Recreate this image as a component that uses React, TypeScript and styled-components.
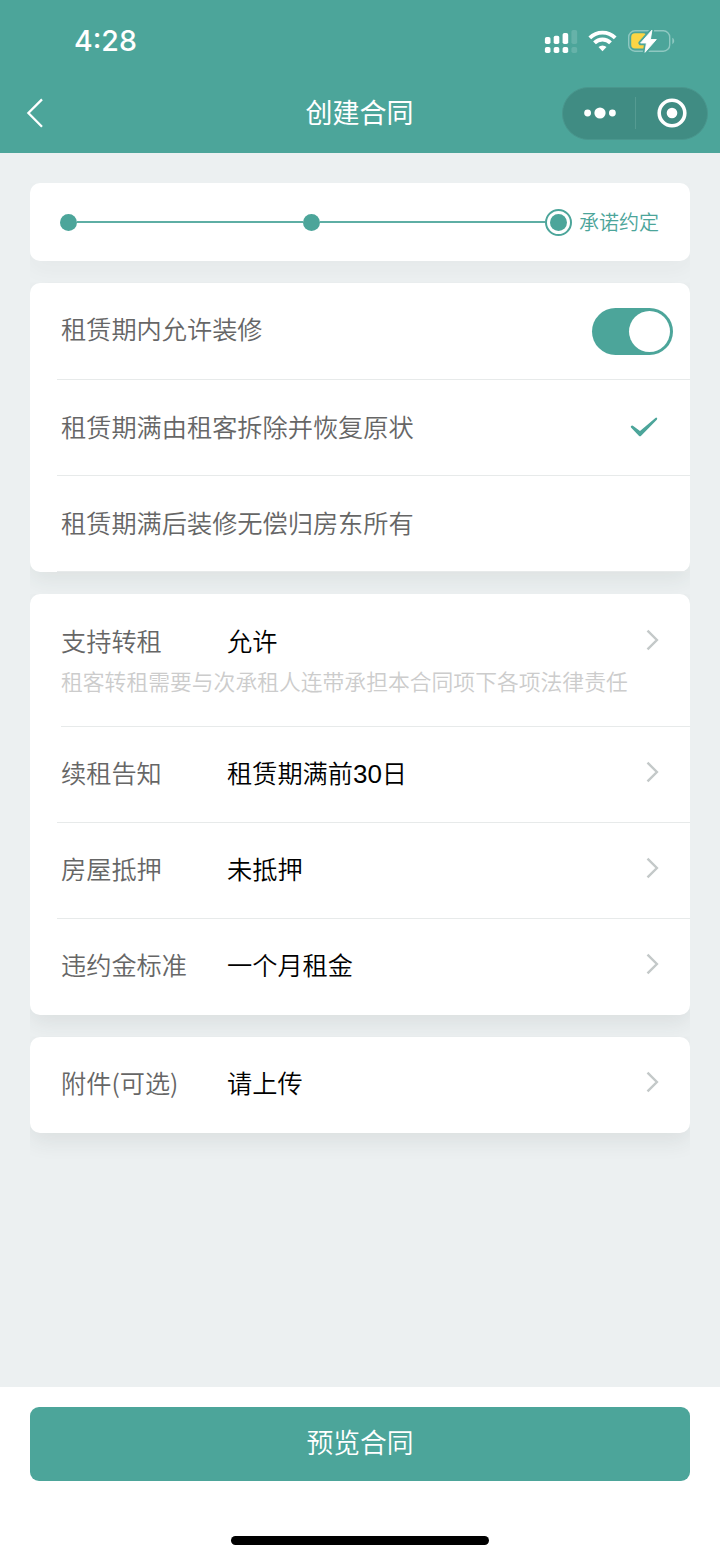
import React, { useState } from "react";
import styled, { createGlobalStyle } from "styled-components";

const GREEN = "#4ca59a";

const GlobalStyle = createGlobalStyle`
  * { box-sizing: border-box; }
  body {
    margin: 0;
    background: #ecf0f1;
    font-family: "Noto Sans CJK SC", sans-serif;
    font-weight: 350;
  }
`;

const Screen = styled.div`
  width: 720px;
  height: 1558px;
  display: flex;
  flex-direction: column;
  background: #ecf0f1;
  overflow: hidden;
`;

const Header = styled.header`
  height: 153px;
  flex: none;
  background: ${GREEN};
  color: #fff;
`;

const StatusBar = styled.div`
  height: 82px;
  padding: 0 45px 0 74px;
  display: flex;
  align-items: center;
  justify-content: space-between;
`;

const Time = styled.span`
  font: 550 28.5px/36px Inter, sans-serif;
  letter-spacing: 0;
`;

const StatusIcons = styled.div`
  display: flex;
  align-items: center;
  height: 30px;
`;

const NavBar = styled.div`
  height: 62px;
  padding: 0 12px 0 26px;
  display: grid;
  grid-template-columns: 146px 1fr 146px;
  align-items: center;
`;

const BackButton = styled.button`
  width: 20px;
  height: 32px;
  padding: 0;
  border: 0;
  background: none;
  display: block;
`;

const Title = styled.h1`
  margin: 0 15px 2px 0;
  text-align: center;
  font-size: 27px;
  line-height: 40px;
  font-weight: 400;
`;

const Capsule = styled.div`
  width: 146px;
  height: 53px;
  border-radius: 27px;
  background: #408c83;
  border: 1px solid #4a968d;
  display: flex;
  align-items: center;
`;

const CapsuleButton = styled.button`
  flex: 1;
  height: 51px;
  padding: 0 0 0 2px;
  border: 0;
  background: none;
  display: flex;
  align-items: center;
  justify-content: center;
`;

const CapsuleRule = styled.span`
  width: 1px;
  height: 32px;
  background: #559b92;
`;

const Content = styled.main`
  flex: 1;
  padding: 30px 30px 0;
  display: flex;
  flex-direction: column;
`;

const Card = styled.section<{ $height: number; $gap: number; $shade: number }>`
  flex: none;
  height: ${(p) => p.$height}px;
  margin-bottom: ${(p) => p.$gap}px;
  background: #fff;
  border-radius: 10px;
  box-shadow: 0 8px 22px rgba(40, 60, 55, ${(p) => p.$shade});
  clip-path: inset(0 0 -40px 0);
`;

const StepCard = styled(Card)`
  display: flex;
  align-items: center;
  padding: 0 31px 0 30px;
`;

const StepDot = styled.span`
  width: 17px;
  height: 17px;
  border-radius: 50%;
  background: ${GREEN};
`;

const StepLine = styled.span`
  flex: 1;
  height: 2px;
  background: ${GREEN};
  opacity: 0.9;
`;

const StepCurrent = styled.span`
  width: 27px;
  height: 27px;
  border: 2px solid ${GREEN};
  border-radius: 50%;
  display: flex;
  align-items: center;
  justify-content: center;
`;

const StepLabel = styled.span`
  margin-left: 7px;
  font-size: 20px;
  line-height: 30px;
  color: ${GREEN};
`;

const Row = styled.div<{ $height?: number; $line?: boolean; $inset?: number; $lift?: number }>`
  height: ${(p) => p.$height ?? 96}px;
  margin-left: ${(p) => p.$inset ?? 27}px;
  padding: 0 31px ${(p) => p.$lift ?? 3}px ${(p) => 31 - (p.$inset ?? 27)}px;
  border-bottom: ${(p) => (p.$line ? "1px solid #e7eaea" : "0")};
  display: flex;
  flex-direction: column;
  justify-content: center;
`;

const RowMain = styled.div`
  display: flex;
  align-items: center;
  height: 38px;
`;

const Label = styled.span<{ $wide?: boolean }>`
  width: ${(p) => (p.$wide ? "auto" : "166px")};
  padding-bottom: 2px;
  font-size: 25.2px;
  line-height: 36px;
  color: #666;
  white-space: nowrap;
`;

const Value = styled.span`
  padding-bottom: 2px;
  font-size: 25.2px;
  line-height: 36px;
  color: #000;
  white-space: nowrap;
`;

const Digits = styled.span`
  font-family: "Liberation Sans", sans-serif;
  font-size: 26px;
  line-height: 1;
`;

const Trail = styled.span<{ $right?: number }>`
  margin-left: auto;
  margin-right: ${(p) => p.$right ?? 0}px;
  display: flex;
`;

const SwitchTrail = styled(Trail)`
  padding-top: 4px;
`;

const ArrowTrail = styled(Trail)<{ $raise?: number }>`
  padding-bottom: ${(p) => p.$raise ?? 2}px;
`;

const Hint = styled.p`
  margin: 5px 0 0;
  font-size: 21.8px;
  line-height: 32px;
  color: #ccc;
  white-space: nowrap;
`;

const Switch = styled.button<{ $on: boolean }>`
  width: 81px;
  height: 47px;
  padding: 3px;
  border: 0;
  border-radius: 24px;
  background: ${(p) => (p.$on ? GREEN : "#dfdfdf")};
  display: flex;
  justify-content: ${(p) => (p.$on ? "flex-end" : "flex-start")};
`;

const Knob = styled.span`
  width: 41px;
  height: 41px;
  border-radius: 50%;
  background: #fff;
`;

const Footer = styled.footer`
  flex: none;
  height: 171px;
  padding: 20px 30px 13px;
  background: #fff;
  display: flex;
  flex-direction: column;
  align-items: center;
  justify-content: space-between;
`;

const Submit = styled.button`
  width: 100%;
  height: 74px;
  padding: 0 0 4px;
  border: 0;
  border-radius: 9px;
  background: ${GREEN};
  color: #fff;
  font: inherit;
  font-size: 26.8px;
  line-height: 40px;
`;

const HomeBar = styled.span`
  width: 258px;
  height: 9px;
  border-radius: 5px;
  background: #000;
`;

const Signal = () => (
  <svg width="34" height="26" viewBox="0 0 34 26" fill="#fff">
    <rect x="0.9" y="9" width="5.6" height="7" rx="1.8" />
    <rect x="9.7" y="7.7" width="5.6" height="8.3" rx="1.8" />
    <rect x="18.6" y="5" width="5.6" height="11" rx="1.8" />
    <rect x="27.4" y="2" width="5.8" height="14" rx="1.8" opacity="0.15" />
    <rect x="0.9" y="19" width="5.6" height="6" rx="1.8" />
    <rect x="9.7" y="19" width="5.6" height="6" rx="1.8" />
    <rect x="18.6" y="19" width="5.6" height="6" rx="1.8" />
    <rect x="27.4" y="19" width="5.8" height="6" rx="1.8" opacity="0.15" />
  </svg>
);

const Wifi = () => (
  <svg width="29" height="22" viewBox="0 0 29 22">
    <g fill="none" stroke="#fff" strokeWidth="3.9">
      <path d="M1.8 7.9 A18 18 0 0 1 27.2 7.9" />
      <path d="M6.5 12.8 A11.3 11.3 0 0 1 22.5 12.8" />
    </g>
    <path d="M14.5 21.2 L10.5 17.1 A5.7 5.7 0 0 1 18.5 17.1 Z" fill="#fff" />
  </svg>
);

const BOLT = "M24.9 2.2 L13.6 15 H19.4 L18 24.3 L29.3 11.5 H23.4 Z";

const Battery = () => (
  <svg width="48" height="26" viewBox="0 0 48 26">
    <rect x="1.7" y="2.8" width="41" height="20.4" rx="6.3" fill="none" stroke="#8fc8c1" strokeWidth="1.4" />
    <path d="M45.3 9.8 C47.8 11 47.8 15 45.3 16.2 Z" fill="#8fc8c1" />
    <rect x="4.2" y="5.2" width="15.6" height="15.4" rx="3.8" fill="#fcd545" />
    <path d={BOLT} fill={GREEN} stroke={GREEN} strokeWidth="4.4" strokeLinejoin="round" />
    <path d={BOLT} fill="#fff" stroke="#fff" strokeWidth="0.9" strokeLinejoin="round" />
  </svg>
);

const Gap = styled.span<{ $w: number }>`
  width: ${(p) => p.$w}px;
`;

const Arrow = () => (
  <svg width="13" height="22" viewBox="0 0 13 22" fill="none" stroke="#c4c9c9" strokeWidth="2.4">
    <path d="M1.5 1.6 L10.9 11 L1.5 20.4" />
  </svg>
);

const Check = () => (
  <svg width="28" height="20" viewBox="0 0 28 20" fill={GREEN}>
    <path d="M1 10.4 Q0.4 9.6 1.1 8.9 Q2 8.1 2.9 8.7 L10 14 L25.4 0.9 Q26.3 0.3 27 1 Q27.6 1.8 26.8 2.7 L10.9 18.9 Q10 19.7 9.1 18.9 Z" />
  </svg>
);

interface Field {
  label: string;
  value: React.ReactNode;
}

const fields: Field[] = [
  {
    label: "续租告知",
    value: (
      <>
        租赁期满前<Digits>30</Digits>日
      </>
    ),
  },
  { label: "房屋抵押", value: "未抵押" },
  { label: "违约金标准", value: "一个月租金" },
];

const FieldMain = ({ label, value }: Field) => (
  <RowMain>
    <Label>{label}</Label>
    <Value>{value}</Value>
    <ArrowTrail>
      <Arrow />
    </ArrowTrail>
  </RowMain>
);

export default function App() {
  const [allowed, setAllowed] = useState(true);

  return (
    <Screen>
      <GlobalStyle />
      <Header>
        <StatusBar>
          <Time>4:28</Time>
          <StatusIcons>
            <Signal />
            <Gap $w={10.5} />
            <Wifi />
            <Gap $w={10} />
            <Battery />
          </StatusIcons>
        </StatusBar>
        <NavBar>
          <BackButton aria-label="返回">
            <svg width="20" height="32" viewBox="0 0 20 32" fill="none" stroke="#fff" strokeWidth="2.3">
              <path d="M16 2.4 L2.4 16 L16 29.8" />
            </svg>
          </BackButton>
          <Title>创建合同</Title>
          <Capsule>
            <CapsuleButton aria-label="更多">
              <svg width="32" height="12" viewBox="0 0 32 12" fill="#fff">
                <circle cx="3.6" cy="6" r="3.4" />
                <circle cx="16" cy="6" r="5.6" />
                <circle cx="28.4" cy="6" r="3.4" />
              </svg>
            </CapsuleButton>
            <CapsuleRule />
            <CapsuleButton aria-label="关闭">
              <svg width="30" height="30" viewBox="0 0 30 30">
                <circle cx="15" cy="15" r="12.8" fill="none" stroke="#fff" strokeWidth="3.6" />
                <circle cx="15" cy="15" r="5.3" fill="#fff" />
              </svg>
            </CapsuleButton>
          </Capsule>
        </NavBar>
      </Header>

      <Content>
        <StepCard $height={78} $gap={21.5} $shade={0.04}>
          <StepDot />
          <StepLine />
          <StepDot />
          <StepLine />
          <StepCurrent>
            <StepDot />
          </StepCurrent>
          <StepLabel>承诺约定</StepLabel>
        </StepCard>

        <Card $height={289.5} $gap={22} $shade={0.08}>
          <Row $height={97.5} $line>
            <RowMain>
              <Label $wide>租赁期内允许装修</Label>
              <SwitchTrail $right={-14}>
                <Switch $on={allowed} onClick={() => setAllowed(!allowed)} aria-label="租赁期内允许装修">
                  <Knob />
                </Switch>
              </SwitchTrail>
            </RowMain>
          </Row>
          <Row $line $lift={1}>
            <RowMain>
              <Label $wide>租赁期满由租客拆除并恢复原状</Label>
              <Trail $right={1}>
                <Check />
              </Trail>
            </RowMain>
          </Row>
          <Row $line $lift={1}>
            <RowMain>
              <Label $wide>租赁期满后装修无偿归房东所有</Label>
            </RowMain>
          </Row>
        </Card>

        <Card $height={420.5} $gap={22} $shade={0.09}>
          <Row $height={132.5} $inset={31} $lift={0.5} $line>
            <FieldMain label="支持转租" value="允许" />
            <Hint>租客转租需要与次承租人连带承担本合同项下各项法律责任</Hint>
          </Row>
          {fields.map((f, i) => (
            <Row key={f.label} $line={i < fields.length - 1}>
              <FieldMain {...f} />
            </Row>
          ))}
        </Card>

        <Card $height={96} $gap={0} $shade={0.09}>
          <Row>
            <FieldMain label="附件(可选)" value="请上传" />
          </Row>
        </Card>
      </Content>

      <Footer>
        <Submit>预览合同</Submit>
        <HomeBar />
      </Footer>
    </Screen>
  );
}
